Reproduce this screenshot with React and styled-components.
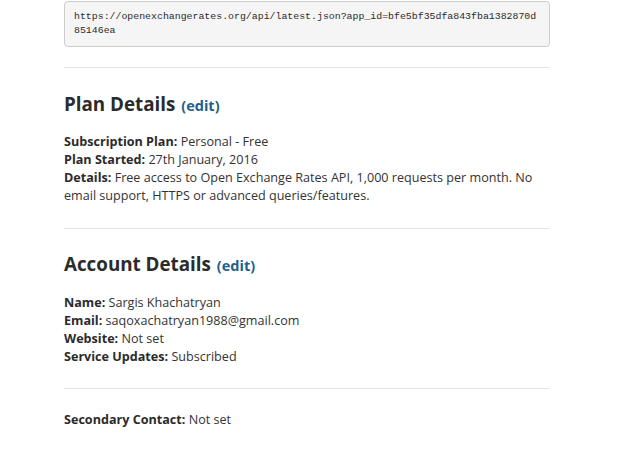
import React from 'react';
import styled, { createGlobalStyle } from 'styled-components';

const GlobalStyle = createGlobalStyle`
    html, body {
        margin: 0;
        padding: 0;
        background: #ffffff;
    }
    body {
        font-family: 'Open Sans', 'Liberation Sans', sans-serif;
        color: #333333;
    }
`;

const plan = [
    { label: 'Subscription Plan:', value: 'Personal - Free' },
    { label: 'Plan Started:', value: '27th January, 2016' },
    {
        label: 'Details:',
        value: 'Free access to Open Exchange Rates API, 1,000 requests per month. No email support, HTTPS or advanced queries/features.',
    },
];

const account = [
    { label: 'Name:', value: 'Sargis Khachatryan' },
    { label: 'Email:', value: 'saqoxachatryan1988@gmail.com' },
    { label: 'Website:', value: 'Not set' },
    { label: 'Service Updates:', value: 'Subscribed' },
];

export default function App() {
    return (
        <>
            <GlobalStyle />
            <Page>
                <CodeBlock>
                    https://openexchangerates.org/api/latest.json?app_id=bfe5bf35dfa843fba1382870d85146ea
                </CodeBlock>
                <Divider />

                <Heading $top={24}>
                    Plan Details <EditLink href="#">(edit)</EditLink>
                </Heading>
                <InfoList>
                    {plan.map((row) => (
                        <Row key={row.label}>
                            <Label>{row.label}</Label> {row.value}
                        </Row>
                    ))}
                </InfoList>
                <Divider $top={23} />

                <Heading $top={23}>
                    Account Details <EditLink href="#">(edit)</EditLink>
                </Heading>
                <InfoList $top={16}>
                    {account.map((row) => (
                        <Row key={row.label}>
                            <Label>{row.label}</Label> {row.value}
                        </Row>
                    ))}
                </InfoList>
                <Divider $top={22} />

                <InfoList $top={22}>
                    <Row>
                        <Label>Secondary Contact:</Label> Not set
                    </Row>
                </InfoList>
            </Page>
        </>
    );
}

const Page = styled.div`
    width: 486px;
    margin-left: 64px;
    padding-top: 1px;
`;

const CodeBlock = styled.pre`
    margin: 0;
    padding: 8px 9px;
    background-color: #f5f5f5;
    border: 1px solid #cccccc;
    border-radius: 4px;
    font-family: 'Liberation Mono', 'DejaVu Sans Mono', monospace;
    font-size: 9.9px;
    line-height: 14px;
    color: #2b2b2b;
    white-space: pre-wrap;
    word-break: break-all;
`;

const Divider = styled.hr`
    margin: ${(p) => p.$top || 20}px 0 0;
    border: 0;
    border-top: 1px solid #e6e6e6;
    height: 0;
`;

const Heading = styled.h2`
    margin: ${(p) => p.$top || 23}px 0 0;
    font-size: 18.8px;
    line-height: 24px;
    font-weight: 700;
    color: #2b2b2b;
`;

const EditLink = styled.a`
    margin-left: 1px;
    font-size: 14.5px;
    font-weight: 700;
    color: #1f5f8b;
    text-decoration: none;
`;

const InfoList = styled.div`
    margin-top: ${(p) => p.$top || 15}px;
    font-size: 12.6px;
    line-height: 18px;
`;

const Row = styled.div`
    color: #333333;
`;

const Label = styled.strong`
    font-weight: 700;
    color: #2b2b2b;
`;
